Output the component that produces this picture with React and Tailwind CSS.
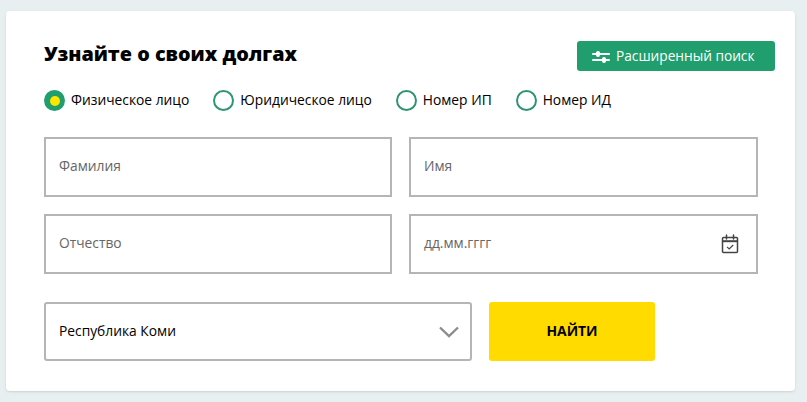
const radios = [
  { label: "Физическое лицо", checked: true },
  { label: "Юридическое лицо" },
  { label: "Номер ИП" },
  { label: "Номер ИД" },
];

function Field({ placeholder, children }) {
  return (
    <div className="h-[60px] border-2 border-[#b5b5b5] flex items-center justify-between pl-[13px] pr-[17px] text-[13.8px] text-[#666]">
      <span className="mb-[1px]">{placeholder}</span>
      {children}
    </div>
  );
}

function CalendarIcon() {
  return (
    <svg width="18" height="20" viewBox="0 0 18 20" fill="none" stroke="#444" strokeWidth="1.5" className="mb-[1px]">
      <rect x="1.5" y="3.5" width="15" height="15" rx="1" />
      <path d="M1.5 7.2h15" strokeWidth="2" />
      <path d="M5.5 1v4M12.5 1v4" strokeLinecap="round" />
      <path d="M6 12.8l2.2 2.2 4-4" strokeWidth="1.2" />
    </svg>
  );
}

export default function App() {
  return (
    <div className="w-[807px] h-[402px] bg-[#e8eff1] pt-[11px] pl-[6px] overflow-hidden font-['Open_Sans',sans-serif] text-black">
      <div className="w-[789px] h-[380px] bg-white rounded-[4px] shadow-sm pt-[30px] pl-[38px]">
        <div className="flex items-start justify-between w-[731px] h-[30px]">
          <h2 className="text-[19.8px] font-extrabold leading-[26px]">Узнайте о своих долгах</h2>
          <button className="w-[198px] h-[30px] bg-[#219e6d] rounded-[3px] flex items-center gap-[6px] pl-[15px] pt-[1px] text-white text-[13.7px]">
            <svg width="18" height="14" viewBox="0 0 18 14" fill="white">
              <rect x="0" y="3" width="18" height="2" rx="1" />
              <rect x="0" y="9" width="18" height="2" rx="1" />
              <rect x="4" y="1" width="4" height="6" rx="2" />
              <rect x="10" y="7" width="4" height="6" rx="2" />
            </svg>
            Расширенный поиск
          </button>
        </div>

        <div className="flex items-center gap-[24px] mt-[19px] h-[21px] text-[13.8px]">
          {radios.map((r) => (
            <label key={r.label} className="flex items-center gap-[6px]">
              {r.checked ? (
                <span className="w-[21px] h-[21px] rounded-full bg-[#219e6d] flex items-center justify-center">
                  <span className="w-[10px] h-[10px] rounded-full bg-[#ffe600]" />
                </span>
              ) : (
                <span className="w-[21px] h-[21px] rounded-full border-2 border-[#2f9474]" />
              )}
              {r.label}
            </label>
          ))}
        </div>

        <div className="grid grid-cols-[348px_349px] gap-x-[17px] gap-y-[17px] mt-[26px]">
          <Field placeholder="Фамилия" />
          <Field placeholder="Имя" />
          <Field placeholder="Отчество" />
          <Field placeholder="дд.мм.гггг">
            <CalendarIcon />
          </Field>
        </div>

        <div className="flex gap-[17px] mt-[28px]">
          <div className="w-[428px] h-[59px] border-2 border-[#b5b5b5] rounded-[3px] flex items-center justify-between pl-[13px] pr-[11px] text-[13.8px]">
            <span>Республика Коми</span>
            <svg width="20" height="12" viewBox="0 0 20 12" fill="none" stroke="#8c8c8c" strokeWidth="2.4">
              <path d="M1 1.5l9 8.5 9-8.5" />
            </svg>
          </div>
          <button className="w-[166px] h-[59px] bg-[#ffdb00] rounded-[3px] text-[13.9px] font-bold">НАЙТИ</button>
        </div>
      </div>
    </div>
  );
}
